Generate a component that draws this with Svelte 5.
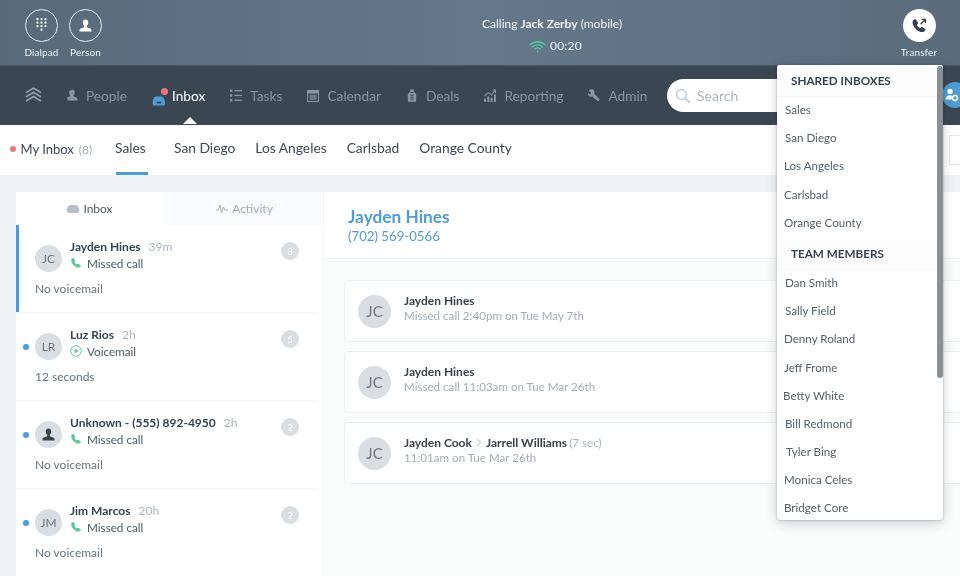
<script>
  const nav = [
    { label: 'People', icon: 'people' },
    { label: 'Inbox', icon: 'inbox', active: true },
    { label: 'Tasks', icon: 'tasks' },
    { label: 'Calendar', icon: 'calendar' },
    { label: 'Deals', icon: 'deals' },
    { label: 'Reporting', icon: 'reporting' },
    { label: 'Admin', icon: 'admin' }
  ];
  const tabs = ['San Diego', 'Los Angeles', 'Carlsbad', 'Orange County'];
  const threads = [
    { who: 'Jayden Hines', init: 'JC', time: '39m', kind: 'call', what: 'Missed call', note: 'No voicemail', n: 3, selected: true },
    { who: 'Luz Rios', init: 'LR', time: '2h', kind: 'play', what: 'Voicemail', note: '12 seconds', n: 5, unread: true },
    { who: 'Unknown - (555) 892-4950', init: '', time: '2h', kind: 'call', what: 'Missed call', note: 'No voicemail', n: 2, unread: true },
    { who: 'Jim Marcos', init: 'JM', time: '20h', kind: 'call', what: 'Missed call', note: 'No voicemail', n: 2, unread: true }
  ];
  const shared = [['Sales', 1], ['San Diego', 1], ['Los Angeles', 0], ['Carlsbad', 0], ['Orange County', 0]];
  const team = [['Dan Smith', 1], ['Sally Field', 1], ['Denny Roland', 0], ['Jeff Frome', 0], ['Betty White', -1], ['Bill Redmond', 1], ['Tyler Bing', 2], ['Monica Celes', 0], ['Bridget Core', 0]];
  const phone = 'M5.2 1.6 7.4 4.8c.3.4.2.9-.1 1.2L6.2 7.2c.7 1.5 1.9 2.8 3.4 3.6l1.2-1.1c.3-.3.8-.4 1.2-.1l3 2.2c.4.3.5.9.2 1.3-.7 1-1.7 1.9-2.9 1.9C7 15 1.6 9 1.6 4.2c0-1.1.9-2.1 2.2-2.8.5-.2 1.1-.2 1.4.2Z';
  const person = 'M8 .5c2.2 0 3.4 1.6 3.4 3.7 0 1.7-.8 3.4-1.8 4.2v1.200c0 .7 1 1.100 2.500 1.600 1.600.5 3 1 3.300 2.600.1.600 0 1.200 0 1.700H.6c0-.5-.1-1.100 0-1.700.3-1.600 1.700-2.100 3.300-2.600 1.500-.5 2.500-.9 2.500-1.600V8.400c-1-.8-1.800-2.500-1.800-4.200C4.600 2.100 5.800.5 8 .5Z';
</script>

<div class="page">
  <header class="callbar">
    <div class="actions">
      <div class="action">
        <span class="ring">
          <svg width="11" height="15" viewBox="0 0 11 15" fill="#fff">
            {#each [1.2, 4.7, 8.200] as y}
              {#each [1.500, 5.500, 9.500] as x}
                <circle cx={x} cy={y} r="1.150" />
              {/each}
            {/each}
            <circle cx="5.500" cy="11.700" r="1.150" />
          </svg>
        </span>
        <span class="cap">Dialpad</span>
      </div>
      <div class="action">
        <span class="ring">
          <svg width="13" height="13" viewBox="0 0 16 16" fill="#fff"><path d={person}/></svg>
        </span>
        <span class="cap">Person</span>
      </div>
    </div>
    <div class="status">
      <div class="calling">Calling <b>Jack Zerby</b> (mobile)</div>
      <div class="timer">
        <svg width="17" height="13" viewBox="0 0 17 13" fill="none" stroke="#4fd09b" stroke-width="1.3" stroke-linecap="round"><path d="M1 4.600C5.200.8 11.800.8 16 4.600M3.400 6.900c3-2.600 7.200-2.600 10.200 0M5.700 9.100c1.700-1.400 3.900-1.400 5.600 0"/><circle cx="8.500" cy="11.400" r=".9" fill="#4fd09b" stroke="none"/></svg>
        <span>00:20</span>
      </div>
    </div>
    <div class="action transfer">
      <span class="ring solid">
        <svg width="16" height="16" viewBox="0 0 17 17"><path d={phone} fill="#36424e"/><path d="M10.200 6.600 15 1.800M11.400 1.500h3.900v3.900" fill="none" stroke="#36424e" stroke-width="1.400"/></svg>
      </span>
      <span class="cap">Transfer</span>
    </div>
  </header>

  <nav class="nav">
    <svg class="logo" width="17" height="16" viewBox="0 0 18 17" fill="none" stroke="#9aa5af" stroke-width="1.800"><path d="M1 6 9 1.200 17 6M1 10.500l8-4.800 8 4.800M1 15l8-4.800 8 4.800"/></svg>
    <ul class="links">
      {#each nav as item}
        <li class="link" class:active={item.active}>
          <span class="glyph" class:wide={item.icon === 'inbox'}>
            {#if item.icon === 'people'}
              <svg width="12" height="12" viewBox="0 0 13 14" fill="#8b959f"><path d="M7 .8c1.700 0 2.700 1.300 2.700 3 0 1.300-.6 2.600-1.400 3.300v1c0 .5.8.8 1.900 1.200 1.200.4 2.500.9 2.700 2.100l.1 1.900H1.400V11.600c0-.5-.7-.5-1.100-.9.5-.9 1.700-1.200 2.900-1.600.6-.2 1.200-.5 1.200-1V7.100C3.600 6.400 3.200 5.100 3.200 3.800c0-.2 0-.4.1-.6C4 1.800 5.300.8 7 .8Z"/></svg>
            {:else if item.icon === 'inbox'}
              <span class="inbox-glyph">
                <svg width="14" height="10" viewBox="0 0 14 11" fill="#4f9bd3"><path d="M3.300.5h6.400c1.400.3 2.400 1.300 3 2.800.6 1.100.8 2.200.8 3.200V9c0 .9-.6 1.500-1.500 1.500H1.500C.6 10.500 0 9.900 0 9V6.500c0-1.100.3-2.200.8-3.200C1.400 1.800 2 .8 3.300.5Z"/><path d="M4 6.300h6L9 8.300H5Z" fill="#36424e"/></svg>
                <i class="badge"></i>
              </span>
            {:else if item.icon === 'tasks'}
              <svg width="12" height="13" viewBox="0 0 12 13" fill="#8b959f"><rect y=".5" width="2.400" height="2.400" rx=".6"/><rect y="5.300" width="2.400" height="2.400" rx=".6"/><rect y="10.100" width="2.400" height="2.400" rx=".6"/><rect x="4.400" y="1" width="7.600" height="1.300"/><rect x="4.400" y="5.800" width="7.600" height="1.300"/><rect x="4.400" y="10.600" width="7.600" height="1.300"/></svg>
            {:else if item.icon === 'calendar'}
              <svg width="12" height="13" viewBox="0 0 12 13" fill="#8b959f"><path d="M0 1h12v12H0Zm1 3.500V12h10V4.500Z"/><path d="M2.500 5.700h7v5.200h-7Z" opacity=".65"/></svg>
            {:else if item.icon === 'deals'}
              <svg width="10" height="13" viewBox="0 0 10 14" fill="#8b959f"><path d="M3 .5h4v2.200l1.100 1.400c.9.500 1.400 1.300 1.400 2.200v6c0 .8-.7 1.400-1.500 1.400H2c-.8 0-1.500-.6-1.500-1.400v-6c0-.9.500-1.700 1.400-2.200L3 2.700Z"/><path d="M3.200 3.800h3.600" stroke="#3a4753" fill="none"/><rect x="3.200" y="6.300" width="3.600" height="1.100" fill="#3a4753"/><rect x="3.200" y="8.300" width="3.600" height="1.100" fill="#3a4753"/><rect x="3.200" y="10.300" width="3.600" height="1.100" fill="#3a4753"/></svg>
            {:else if item.icon === 'reporting'}
              <svg width="12" height="13" viewBox="0 0 12 13" fill="#8b959f"><path d="M0 9.500h2v3.500H0ZM3.300 7.500h2V13h-2ZM6.600 9h2v4h-2ZM9.900 5.500h2V13h-2Z"/><path d="M.3 7 4.300 3.600 7.500 6 11 1.500M8.500 1h3v3" fill="none" stroke="#8b959f" stroke-width="1.100"/></svg>
            {:else}
              <svg width="12" height="12" viewBox="0 0 13 13" fill="#8b959f"><path d="M5.200.4c-1.400-.4-3 0-4 1-.3.300-.3.400 0 .7L3.100 4 2.800 5.500 1.400 5.800l-1-1c-.2-.2-.4 0-.4.200 0 1.300.5 2.400 1.500 3 .9.500 2 .5 3 .1l5.600 4.600c.6.500 1.500.4 2-.2.500-.6.400-1.400-.1-1.900L6.700 5c.3-1.100.2-2.200-.4-3.100C6 1.200 5.700.6 5.200.4Z"/></svg>
            {/if}
          </span>
          <span>{item.label}</span>
          {#if item.active}<i class="notch"></i>{/if}
        </li>
      {/each}
    </ul>
    <div class="search">
      <svg width="16" height="16" viewBox="0 0 16 16" fill="none" stroke="#c4ccd4" stroke-width="1.500"><circle cx="6.500" cy="6.500" r="5"/><path d="m10.300 10.300 4.500 4.500" stroke-width="2"/></svg>
      <span>Search</span>
    </div>
    <span class="me">
      <svg width="14" height="14" viewBox="0 0 14 14"><circle cx="5" cy="3.500" r="2.700" fill="#fff"/><path d="M.5 11.500c0-2.600 2-4.200 4.500-4.200.7 0 1.300.1 1.900.4v3.800Z" fill="#fff"/><circle cx="10" cy="10" r="2.400" fill="none" stroke="#fff" stroke-width="1.500"/></svg>
    </span>
  </nav>

  <div class="subtabs">
    <div class="mine"><i class="dot red"></i><span>My Inbox</span> <em>(8)</em></div>
    <div class="tab current">Sales</div>
    {#each tabs as t}<div class="tab">{t}</div>{/each}
    <span class="ghost"></span>
  </div>

  <main class="content">
    <section class="list">
      <div class="listtabs">
        <div class="lt on">
          <svg width="12" height="8" viewBox="0 0 12 8" fill="#b7c0c9"><path d="M3 0h6c1.300.3 2.600 2 3 4v2.500c0 .9-.6 1.500-1.500 1.500h-9C.6 8 0 7.400 0 6.500V4C.4 2 1.700.3 3 0Z"/></svg>
          Inbox
        </div>
        <div class="lt">
          <svg width="12" height="10" viewBox="0 0 12 10" fill="none" stroke="#a9b3bd" stroke-width="1"><path d="M0 6h2.500L4 1l1.500 8L7.500 3l1 3H12"/></svg>
          Activity
        </div>
      </div>
      {#each threads as t}
        <article class="thread" class:selected={t.selected}>
          {#if t.unread}<i class="dot blue"></i>{/if}
          <div class="head">
            <span class="avatar small">
              {#if t.init}{t.init}{:else}
                <svg width="13" height="13" viewBox="0 0 16 16" fill="#36424e"><path d={person}/></svg>
              {/if}
            </span>
            <div class="meta">
              <div class="name"><b>{t.who}</b><span>{t.time}</span></div>
              <div class="what">
                {#if t.kind === 'call'}
                  <svg width="12" height="12" viewBox="0 0 17 17" fill="#5cc99a"><path d={phone}/></svg>
                {:else}
                  <svg width="12" height="12" viewBox="0 0 12 12"><circle cx="6" cy="6" r="5.300" fill="none" stroke="#5cc99a" stroke-width="1"/><path d="M4.600 3.400 8.600 6l-4 2.600Z" fill="#5cc99a"/></svg>
                {/if}
                {t.what}
              </div>
            </div>
            <span class="count">{t.n}</span>
          </div>
          <p class="note">{t.note}</p>
        </article>
      {/each}
    </section>

    <section class="detail">
      <div class="contact">
        <h1>Jayden Hines</h1>
        <div class="tel">(702) 569-0566</div>
      </div>
      <div class="cards">
        <div class="card">
          <span class="avatar">JC</span>
          <div class="ctext"><div class="ct"><b>Jayden Hines</b></div><div class="cs">Missed call 2:40pm on Tue May 7th</div></div>
        </div>
        <div class="card">
          <span class="avatar">JC</span>
          <div class="ctext"><div class="ct"><b>Jayden Hines</b></div><div class="cs">Missed call 11:03am on Tue Mar 26th</div></div>
        </div>
        <div class="card">
          <span class="avatar">JC</span>
          <div class="ctext">
            <div class="ct"><b>Jayden Cook</b>
              <svg width="6" height="9" viewBox="0 0 6 9" fill="none" stroke="#aeb7c0" stroke-width="1"><path d="m1 .8 3.700 3.700L1 8.200"/></svg>
              <b>Jarrell Williams</b> <em>(7 sec)</em></div>
            <div class="cs">11:01am on Tue Mar 26th</div>
          </div>
        </div>
      </div>
    </section>
  </main>

  <aside class="menu">
    <h2>SHARED INBOXES</h2>
    <ul>{#each shared as [n, o]}<li style="margin-left:{o}px">{n}</li>{/each}</ul>
    <h2>TEAM MEMBERS</h2>
    <ul>{#each team as [n, o]}<li style="margin-left:{o}px">{n}</li>{/each}</ul>
    <i class="thumb"></i>
  </aside>
</div>

<style>
  :global(body) { margin: 0; }
  .page {
    position: relative;
    width: 960px;
    height: 576px;
    overflow: hidden;
    display: flex;
    flex-direction: column;
    background: #f0f3f6;
    font-family: "Lato", "Open Sans", sans-serif;
    color: #3c4853;
    filter: blur(.3px);
  }
  b { font-weight: 700; }
  em { font-style: normal; }
  ul { list-style: none; margin: 0; padding: 0; }
  i { display: block; }

  .callbar {
    height: 66px;
    flex: none;
    display: flex;
    align-items: flex-start;
    justify-content: space-between;
    box-sizing: border-box;
    padding: 9px 21px 0 25px;
    background: linear-gradient(90deg, #586a7a 0%, #64788a 50%, #5a6c7c 100%);
    border-bottom: 1px solid #4a5864;
    position: relative;
  }
  .actions { display: flex; gap: 11px; }
  .action { display: flex; flex-direction: column; align-items: center; width: 33px; }
  .ring {
    width: 31px; height: 31px;
    border: 1px solid #e8edf1;
    border-radius: 50%;
    display: flex; align-items: center; justify-content: center;
  }
  .ring.solid { width: 33px; height: 33px; border: 0; background: #fff; }
  .cap { margin-top: 3px; font-size: 10px; line-height: 14px; color: #eef2f5; white-space: nowrap; letter-spacing: .1px; }
  .status { position: absolute; left: 482px; top: 16px; width: 140px; color: #f2f5f7; font-size: 12px; }
  .calling { line-height: 16px; white-space: nowrap; }
  .timer { display: flex; align-items: center; gap: 4px; margin: 6px 0 0 47px; line-height: 16px; letter-spacing: .2px; }
  .transfer { width: 40px; }

  .nav {
    height: 59px;
    flex: none;
    display: flex;
    align-items: center;
    box-sizing: border-box;
    padding: 0 0 1px 25px;
    background: #3a4753;
    position: relative;
  }
  .logo { flex: none; }
  .links { display: flex; gap: 25px; margin-left: 24px; }
  .link {
    position: relative;
    display: flex;
    align-items: center;
    gap: 8px;
    font-size: 13.7px;
    color: #8b959f;
    white-space: nowrap;
  }
  .link.active { color: #fff; gap: 4px; }
  .glyph { display: flex; align-items: center; justify-content: center; width: 12px; }
  .glyph.wide { width: 16px; }
  .inbox-glyph { position: relative; display: block; width: 16px; height: 14px; padding-top: 4px; box-sizing: border-box; }
  .badge { position: absolute; right: 0; top: 0; width: 7px; height: 7px; border-radius: 50%; background: #f0757a; }
  .notch {
    position: absolute; left: 31px; bottom: -20px;
    width: 0; height: 0;
    border-left: 7px solid transparent;
    border-right: 7px solid transparent;
    border-bottom: 7px solid #fff;
  }
  .search {
    position: absolute; left: 667px; top: 13px;
    width: 200px; height: 33px;
    box-sizing: border-box;
    padding-left: 8px;
    border-radius: 17px;
    background: #fff;
    display: flex; align-items: center; gap: 6px;
    font-size: 14px; color: #aab4be;
  }
  .me {
    position: absolute; left: 942px; top: 16px;
    width: 26px; height: 26px; border-radius: 50%;
    background: #4f9bd3;
    display: flex; align-items: center; justify-content: flex-start;
    padding-left: 3px; box-sizing: border-box;
  }

  .subtabs {
    height: 50px;
    flex: none;
    display: flex;
    align-items: center;
    background: #fff;
    font-size: 13.8px;
    position: relative;
  }
  .mine { display: flex; align-items: center; margin-left: 10px; width: 105px; white-space: nowrap; gap: 5px; font-size: 13px; padding-bottom: 2px; box-sizing: border-box; }
  .mine em { color: #a3adb7; font-size: 12px; }
  .dot { width: 6px; height: 6px; border-radius: 50%; }
  .dot.red { background: #f0757a; margin-right: -0.5px; }
  .dot.blue { background: #4f9bd3; position: absolute; left: 7px; top: 31px; }
  .tab { margin-right: 20px; white-space: nowrap; height: 50px; line-height: 46px; box-sizing: border-box; }
  .tab.current { width: 40px; margin-right: 19px; position: relative; }
  .tab.current::after { content: ""; position: absolute; left: 1px; right: 7px; bottom: 0; height: 3px; background: #4f9bd3; }
  .ghost { position: absolute; left: 949px; top: 10px; width: 20px; height: 30px; border: 1px solid #e6eaee; box-sizing: border-box; }

  .content { flex: 1; display: flex; margin: 17px 0 0 16px; min-height: 0; }
  .list { width: 307px; flex: none; background: #fff; }
  .listtabs { display: flex; height: 33px; }
  .lt {
    display: flex; align-items: center; justify-content: center; gap: 4px;
    font-size: 12px; color: #a3adb7;
    width: 159px; background: #fafbfc;
    padding-left: 2px; box-sizing: border-box;
  }
  .lt.on { width: 148px; background: #fff; color: #4c5863; padding-left: 0; }
  .thread {
    position: relative;
    height: 88px;
    box-sizing: border-box;
    padding: 14px 0 0 19px;
    margin-right: 6px;
    border-bottom: 1px solid #f3f5f7;
  }
  .thread.selected { box-shadow: inset 3px 0 0 #4f9bd3; }
  .head { display: flex; align-items: flex-start; position: relative; }
  .avatar {
    width: 33px; height: 33px; flex: none;
    border-radius: 50%;
    background: #d9dee3;
    color: #6b7782;
    display: flex; align-items: center; justify-content: center;
    font-size: 15px;
  }
  .avatar.small { width: 27px; height: 27px; font-size: 12px; margin-top: 6px; }
  .meta { margin-left: 8px; }
  .name { font-size: 12px; line-height: 16px; color: #36424e; white-space: nowrap; }
  .name span { margin-left: 8px; color: #a9b3bd; }
  .what { display: flex; align-items: center; gap: 5px; font-size: 11.7px; line-height: 16px; margin-top: 0; color: #4c5863; }
  .count {
    position: absolute; left: 246px; top: 3px;
    width: 18px; height: 18px; border-radius: 50%;
    background: #d9dee3; color: #fff;
    font-size: 9px; font-weight: 700;
    display: flex; align-items: center; justify-content: center;
  }
  .note { margin: 9px 0 0; font-size: 12px; line-height: 16px; color: #68747f; }

  .detail { flex: 1; min-width: 0; background: #fbfcfc; border-left: 1px solid #f3f5f7; }
  .contact { height: 67px; box-sizing: border-box; padding: 15px 0 0 24px; background: #fff; border-bottom: 1px solid #f3f5f7; }
  h1 { margin: 0; font-size: 17.3px; line-height: 20px; font-weight: 700; color: #4f9bd3; }
  .tel { font-size: 13.2px; line-height: 18px; color: #4f9bd3; }
  .cards { display: flex; flex-direction: column; gap: 9px; padding: 21px 0 0 20px; width: 700px; }
  .card {
    height: 62px; box-sizing: border-box;
    display: flex; align-items: center; gap: 13px;
    padding-left: 13px;
    background: #fff;
    border: 1px solid #eceff2;
    border-radius: 4px;
  }
  .ctext { margin-top: -7px; }
  .ct { font-size: 12px; line-height: 15px; color: #36424e; white-space: nowrap; }
  .ct svg { margin: 0 1px; }
  .ct em { color: #a9b3bd; font-weight: 400; margin-left: -1px; font-size: 11.6px; }
  .cs { font-size: 11.6px; line-height: 15px; color: #a3adb7; white-space: nowrap; }

  .menu {
    position: absolute; left: 777px; top: 65px;
    width: 166px; height: 455px;
    background: #fff;
    border-radius: 3px;
    box-shadow: 0 0 2px rgba(30, 40, 50, .4), 0 3px 12px rgba(30, 40, 50, .22);
    overflow: hidden;
  }
  .menu h2 {
    margin: 0;
    height: 32px; line-height: 29px;
    box-sizing: border-box;
    padding: 1px 0 0 14px;
    font-size: 11.7px; font-weight: 700; color: #36424e;
    background: #fdfdfe;
    border-bottom: 1px solid #f5f6f8;
    overflow: hidden;
  }
  .menu li { height: 28.2px; line-height: 25px; padding-left: 7px; font-size: 11.6px; color: #54606b; }
  .thumb { position: absolute; right: 0; top: 1px; width: 6px; height: 312px; background: #8a8f94; border-radius: 3px; }
</style>
